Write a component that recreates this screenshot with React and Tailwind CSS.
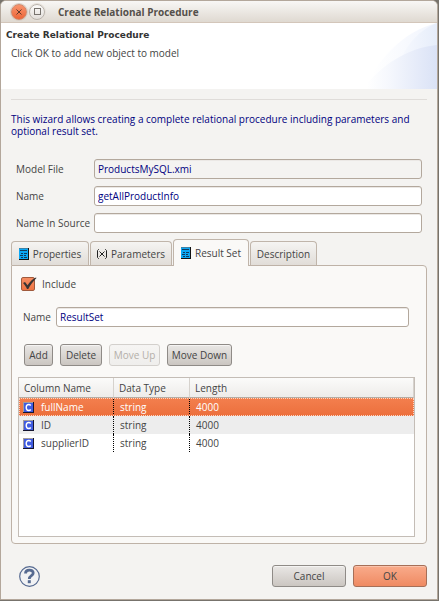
import { useState } from "react";

const sheet = "font-['Open_Sans','Noto_Sans',sans-serif] text-[10px] leading-3 text-[#444]";
const field =
  "h-5 min-w-0 rounded-[3px] border border-[#b3a89d] px-[3px] text-[10px] text-[#00007f] shadow-[inset_0_1px_0_#ebe8e5] outline-none";
const pushButton =
  "h-[22px] rounded-[3px] border border-[#8f8b87] bg-linear-to-b from-[#e9e7e5] to-[#cbc6c1] text-center shadow-[inset_0_1px_0_#f5f4f3] disabled:border-[#d3d0cc] disabled:from-[#f6f5f3] disabled:to-[#efeeec] disabled:text-[#b4afa9]";

const columns = [
  { name: "fullName", type: "string", length: "4000" },
  { name: "ID", type: "string", length: "4000" },
  { name: "supplierID", type: "string", length: "4000" },
];

function ProcedureIcon() {
  return (
    <svg width="10" height="12" viewBox="0 0 10 12" shapeRendering="crispEdges" aria-hidden="true">
      <rect width="9" height="12" fill="#0aa7f5" />
      <path d="M0 0h9v1H0z" fill="#3b83a8" />
      <path d="M9 0h1v12H9zM0 11h10v1H0z" fill="#111" />
      <path d="M1 2h7v1H1zM2 5h2v1H2zM5 5h3v1H5zM1 7h3v1H1zM5 7h2v1H5zM2 9h2v1H2zM5 9h3v1H5z" fill="#103a5c" />
    </svg>
  );
}

function ParameterIcon() {
  return (
    <svg width="10" height="10" viewBox="0 0 10 10" fill="none" stroke="#222" strokeWidth="1" aria-hidden="true">
      <path d="M2 .5H1.500L.5 1.500v7L1.500 9.500H2M8 .5h.5l1 1v7l-1 1H8" />
      <path d="M2.500 2.500l5 5M7.500 2.500l-5 5" />
    </svg>
  );
}

function ColumnIcon() {
  return (
    <svg width="11" height="11" viewBox="0 0 11 11" aria-hidden="true">
      <rect width="11" height="11" fill="#a39c9c" />
      <path d="M11 0v11H0v-1h10V0z" fill="#15152e" />
      <rect x="1" y="1" width="9" height="9" fill="#3f5be0" />
      <path d="M7.800 3.500C7.300 2.800 6.600 2.500 5.800 2.500 4.200 2.500 3.200 3.800 3.200 5.500S4.200 8.500 5.800 8.500c.8 0 1.500-.3 2-1" fill="none" stroke="#fff" strokeWidth="1.400" />
    </svg>
  );
}

function HeaderArt() {
  return (
    <svg className="h-[66px] w-[74px] shrink-0" viewBox="0 0 74 66" aria-hidden="true">
      <defs>
        <linearGradient id="outer" gradientUnits="userSpaceOnUse" x1="10" x2="74" y1="0" y2="0">
          <stop offset="0" stopColor="#fff" />
          <stop offset="1" stopColor="#f0f4fd" />
        </linearGradient>
        <linearGradient id="middle" gradientUnits="userSpaceOnUse" x1="28" x2="74" y1="0" y2="0">
          <stop offset="0" stopColor="#fbfcff" />
          <stop offset="1" stopColor="#e6edfa" />
        </linearGradient>
        <linearGradient id="inner" gradientUnits="userSpaceOnUse" x1="4" x2="74" y1="0" y2="0">
          <stop offset="0" stopColor="#fff" />
          <stop offset="0.300" stopColor="#f6f8fd" />
          <stop offset="1" stopColor="#dae2f6" />
        </linearGradient>
      </defs>
      <path d="M0 66C16 36 40 8 74 0V66Z" fill="url(#outer)" />
      <path d="M28 66C34 36 48 10 74 0V66Z" fill="url(#middle)" />
      <path d="M0 66C18 42 44 25 74 22V66Z" fill="url(#inner)" />
    </svg>
  );
}

const tabs = [
  { name: "Properties", icon: <ProcedureIcon />, width: "w-[78px]" },
  { name: "Parameters", icon: <ParameterIcon />, width: "w-[82px]" },
  { name: "Result Set", icon: <ProcedureIcon />, width: "w-[76px]" },
  { name: "Description", icon: null, width: "w-[67px]" },
];

export default function App() {
  const [selected, setSelected] = useState(0);
  const [include, setInclude] = useState(true);

  return (
    <div className="flex min-h-screen flex-col bg-[#77736c] pr-px pb-px">
      <main
        className={`flex grow flex-col overflow-hidden rounded-t-[6px] border border-[#b3a79b] bg-[#f4f3f1] ${sheet}`}
      >
        <div className="flex h-[22px] items-center border-b border-[#d3c6ba] bg-linear-to-b from-[#f8f7f5] to-[#dfd9d1] pl-[10px]">
          <button
            type="button"
            aria-label="Close"
            className="flex size-4 items-center justify-center rounded-full border border-[#d0886c] bg-linear-to-b from-[#f8936c] to-[#ec6537] text-[#623a2c] ring-1 ring-[#d6cdc4]"
          >
            <svg width="6" height="6" viewBox="0 0 6 6" stroke="currentColor" aria-hidden="true">
              <path d="M.5 .5l5 5M5.500 .5l-5 5" />
            </svg>
          </button>
          <button
            type="button"
            aria-label="Maximize"
            className="ml-[2px] flex size-4 items-center justify-center rounded-full border border-[#b9b3ac] bg-linear-to-b from-[#fcfbfa] to-[#e2deda] ring-1 ring-[#e5dfd8]"
          >
            <span className="size-[7px] border border-[#77736e]" />
          </button>
          <h1 className="ml-[13px] font-bold text-[#55504b]">Create Relational Procedure</h1>
        </div>

        <header className="flex h-[66px] items-start justify-between bg-white">
          <div className="pt-[6px] pl-[5px]">
            <h2 className="font-['DejaVu_Sans','Open_Sans',sans-serif] text-[9px] leading-3 font-bold text-[#333]">
              Create Relational Procedure
            </h2>
            <p className="mt-[6px] pl-[5px]">Click OK to add new object to model</p>
          </div>
          <HeaderArt />
        </header>

        <div className="flex grow flex-col px-[10px] pt-[10px] pb-[12px]">
          <hr className="border-[#dfdcd9]" />
          <p className="mt-[13px] text-[#00007f]">
            This wizard allows creating a complete relational procedure including parameters and optional result set.
          </p>

          <div className="mt-[22px] mr-[5px] ml-[5px] grid grid-cols-[78px_1fr] items-center gap-y-[7px]">
            <label htmlFor="model">Model File</label>
            <input id="model" readOnly defaultValue="ProductsMySQL.xmi" className={`${field} bg-[#f4f3f1]`} />
            <label htmlFor="procedure">Name</label>
            <input id="procedure" defaultValue="getAllProductInfo" className={`${field} bg-white`} />
            <label htmlFor="source" className="whitespace-nowrap">
              Name In Source
            </label>
            <input id="source" className={`${field} bg-white`} />
          </div>

          <div role="tablist" className="mt-[6px] flex items-end gap-px">
            {tabs.map((tab) => {
              const active = tab.name === "Result Set";
              return (
                <button
                  key={tab.name}
                  type="button"
                  role="tab"
                  aria-selected={active}
                  className={`flex items-center justify-center gap-1 rounded-t-[4px] border border-b-0 border-[#c0b5aa] whitespace-nowrap ${tab.width} ${
                    active ? "z-10 -mb-px h-[27px] bg-[#faf9f7]" : "h-6 bg-linear-to-b from-[#f5f4f2] to-[#e1ddd8]"
                  }`}
                >
                  {tab.icon}
                  {tab.name}
                </button>
              );
            })}
          </div>

          <section
            role="tabpanel"
            className="flex grow flex-col rounded-[4px] rounded-tl-none border border-[#beb2a7] bg-[#faf9f7] px-[6px] pt-[11px] pb-[6px]"
          >
            <div className="ml-[3px] flex items-center gap-[7px]">
              <span className="grid">
                <input
                  id="include"
                  type="checkbox"
                  checked={include}
                  onChange={(event) => setInclude(event.target.checked)}
                  className="peer col-start-1 row-start-1 size-[14px] appearance-none rounded-[2px] border border-[#a05a3c] bg-white checked:bg-linear-to-b checked:from-[#f68d62] checked:to-[#ef7442]"
                />
                <svg
                  className="pointer-events-none invisible col-start-1 row-start-1 overflow-visible peer-checked:visible"
                  width="14"
                  height="14"
                  viewBox="0 0 14 14"
                  aria-hidden="true"
                >
                  <path d="M2 6l2-1 2.500 3.200C9 4.500 11.500 2 15 .5l.5.500C12 4.500 9 8.500 7.300 12H6C5 9.500 3.500 7.500 2 6z" fill="#3a3533" />
                </svg>
              </span>
              <label htmlFor="include">Include</label>
            </div>

            <div className="mt-[16px] mr-[11px] ml-[5px] flex items-center">
              <label htmlFor="resultset" className="w-[33px]">
                Name
              </label>
              <input id="resultset" defaultValue="ResultSet" className={`${field} grow bg-white`} />
            </div>

            <div className="mt-[17px] ml-[6px] flex gap-[7px]">
              <button type="button" className={`${pushButton} w-[29px]`}>
                Add
              </button>
              <button type="button" className={`${pushButton} w-[42px]`}>
                Delete
              </button>
              <button type="button" disabled className={`${pushButton} w-[51px]`}>
                Move Up
              </button>
              <button type="button" className={`${pushButton} w-[65px]`}>
                Move Down
              </button>
            </div>

            <div className="mt-[11px] mr-[5px] grow border border-[#c4bdb6] bg-white">
              <table className="w-full table-fixed border-separate border-spacing-0 text-left">
                <colgroup>
                  <col className="w-[95px]" />
                  <col className="w-[76px]" />
                  <col />
                </colgroup>
                <thead className="bg-linear-to-b from-[#fbfbfa] to-[#edebe9]">
                  <tr className="h-5">
                    <th className="border-r border-b border-r-[#d6d2cd] border-b-[#b5aca4] px-[5px] font-normal">Column Name</th>
                    <th className="border-r border-b border-r-[#d6d2cd] border-b-[#b5aca4] px-[5px] font-normal">Data Type</th>
                    <th className="border-r border-b border-r-[#d6d2cd] border-b-[#b5aca4] px-[5px] font-normal">Length</th>
                  </tr>
                </thead>
                <tbody>
                  {columns.map((column, index) => (
                    <tr
                      key={column.name}
                      onClick={() => setSelected(index)}
                      className={`h-[18px] ${
                        index === selected
                          ? "bg-linear-to-b from-[#f37f4e] to-[#ec6f3c] text-white outline-1 -outline-offset-1 outline-[#fbd5c4] outline-dotted"
                          : index % 2
                            ? "bg-[#ededed]"
                            : "bg-white"
                      }`}
                    >
                      <td className="border-r border-dotted border-black pl-1">
                        <span className="flex items-center gap-[7px]">
                          <ColumnIcon />
                          {column.name}
                        </span>
                      </td>
                      <td className="border-r border-dotted border-black px-[6px]">{column.type}</td>
                      <td className="px-[6px]">{column.length}</td>
                    </tr>
                  ))}
                </tbody>
              </table>
            </div>
          </section>

          <footer className="mt-[21px] flex items-center gap-[7px] pl-2">
            <button type="button" aria-label="Help" className="mr-auto">
              <svg width="21" height="21" viewBox="0 0 21 21" fill="none" stroke="#566a91" aria-hidden="true">
                <circle cx="10.500" cy="10.500" r="9.800" fill="#f1f2f4" strokeWidth="1.200" />
                <path d="M6.500 7.400C6.500 3 14.200 3 14.200 7c0 2.800-3.900 2.400-3.900 6" strokeWidth="2.800" />
                <path d="M10.300 14.200v3" strokeWidth="3" />
              </svg>
            </button>
            <button type="button" className={`${pushButton} w-[74px]`}>
              Cancel
            </button>
            <button
              type="button"
              className="h-[22px] w-[74px] rounded-[3px] border border-[#a66f58] bg-linear-to-b from-[#f9ab8b] to-[#ef8a62] text-center shadow-[inset_0_1px_0_#fbc3ac]"
            >
              OK
            </button>
          </footer>
        </div>
      </main>
    </div>
  );
}
